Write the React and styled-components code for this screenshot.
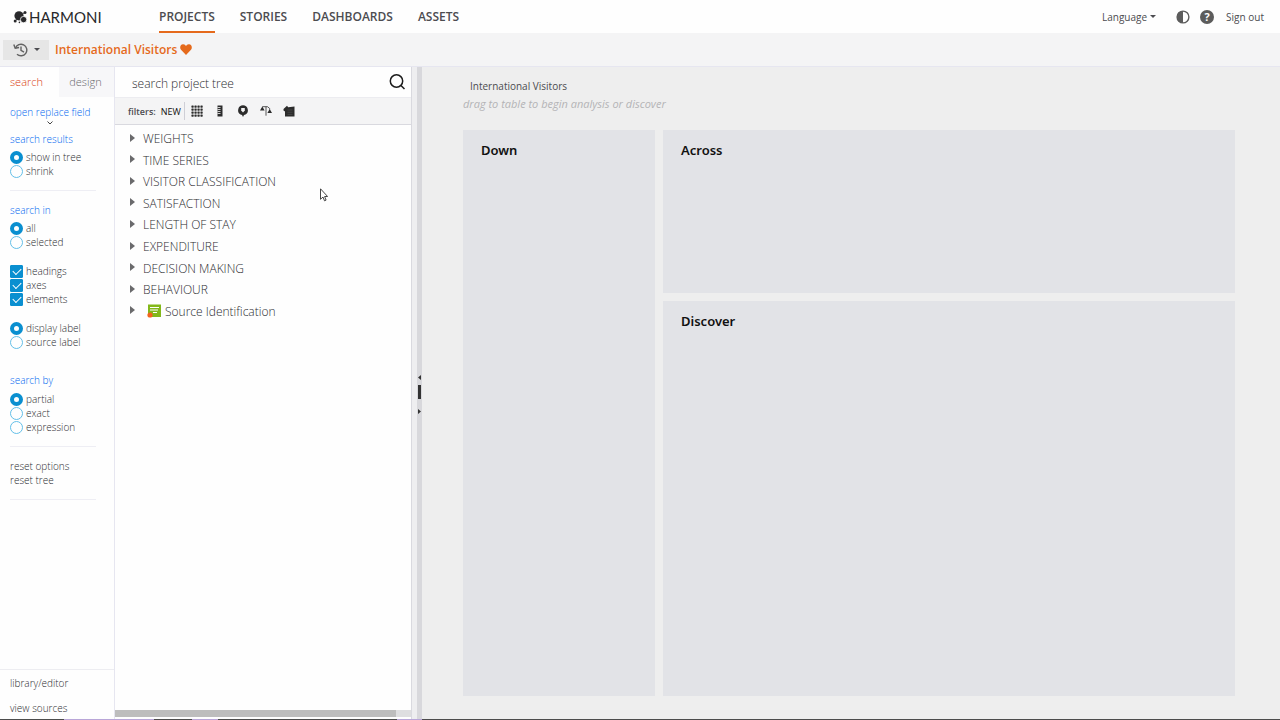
import React, { useState } from "react"
import styled, { createGlobalStyle } from "styled-components"

const colors = {
  accent: "#e56a1c",
  blue: "#0068f0",
  control: "#0a8fd0",
  text: "#4c4c50",
  dark: "#2c2c30",
  light: "#fefefe",
  bar: "#f4f4f5",
  line: "#e6e6f0",
}

const GlobalStyle = createGlobalStyle`
  * {
    box-sizing: border-box;
  }
  body {
    margin: 0;
    font-family: "Open Sans", "Noto Sans", sans-serif;
    color: ${colors.text};
    background: ${colors.light};
  }
  button,
  input {
    font: inherit;
    color: inherit;
  }
  button {
    border: 0;
    padding: 0;
    background: none;
    cursor: pointer;
  }
  a {
    color: inherit;
    text-decoration: none;
  }
`

const tree = [
  "WEIGHTS",
  "TIME SERIES",
  "VISITOR CLASSIFICATION",
  "SATISFACTION",
  "LENGTH OF STAY",
  "EXPENDITURE",
  "DECISION MAKING",
  "BEHAVIOUR",
]

const Logo = () => (
  <svg width="14" height="14" viewBox="0 0 14 14" fill="#29292b">
    <circle cx="6" cy="5.8" r="4.6" />
    <circle cx="10.6" cy="9.6" r="3.2" stroke="#fefefe" strokeWidth=".8" />
    <circle cx="12" cy="2.4" r="1.5" />
    <circle cx="2.2" cy="11" r="1.5" />
    <circle cx="6.4" cy="12.4" r=".8" />
    <path d="M2.2 11L4 9M8 5.500l3.500-3" stroke="#29292b" strokeWidth=".8" />
  </svg>
)

const HistoryIcon = () => (
  <svg width="15" height="14" viewBox="0 0 15 14" fill="none" stroke="#626262" strokeWidth="1.400">
    <path d="M2.500 5.200A5.800 5.800 0 1 1 4 11.200" />
    <path d="M.8 1.500L2.200 5.300l3.900-.8" />
    <path d="M8 3.600v3.800l3 1.800" />
  </svg>
)

const Heart = () => (
  <svg width="12" height="11" viewBox="0 0 12 11" fill={colors.accent}>
    <path d="M6 11L1 5.800C-.6 4 .2 .3 3 .2 4.500 .1 5.500 1 6 2 6.500 1 7.500 .1 9 .2c2.800 .1 3.600 3.800 2 5.600z" />
  </svg>
)

const Contrast = () => (
  <svg width="14" height="14" viewBox="0 0 14 14">
    <circle cx="7" cy="7" r="5.900" fill="#fefefe" stroke="#5c5c5c" strokeWidth="1.400" />
    <path d="M7 1a6 6 0 0 0 0 12z" fill="#5c5c5c" />
  </svg>
)

const SearchIcon = () => (
  <svg width="16" height="16" viewBox="0 0 16 16" fill="none" stroke="#1c1c1c">
    <circle cx="7.500" cy="7" r="6.200" strokeWidth="1.500" />
    <path d="M12 11.500l3.500 3.500" strokeWidth="1.500" />
  </svg>
)

const GridIcon = () => (
  <svg width="12" height="12" viewBox="0 0 12 12" fill="#2c2c2c">
    {[0, 1, 2, 3].map(r =>
      [0, 1, 2, 3].map(c => (
        <rect key={`${r}${c}`} x={c * 3 + 0.4} y={r * 3 + 0.4} width="2.300" height="2.300" rx=".6" />
      ))
    )}
  </svg>
)

const RulerIcon = () => (
  <svg width="12" height="12" viewBox="0 0 12 12">
    <path d="M3.500 .5h5v11h-5z" fill="#2c2c2c" />
    <path d="M3.500 2.500h3M3.500 4.500h3M3.500 6.500h3M3.500 8.500h3" stroke="#f4f4f5" strokeWidth=".8" />
  </svg>
)

const PinIcon = () => (
  <svg width="12" height="12" viewBox="0 0 12 12">
    <path d="M6 .3A4.900 4.900 0 0 0 3.500 9.400L5 10l1 2 1-2 1.500-.6A4.900 4.900 0 0 0 6 .3z" fill="#2c2c2c" />
    <path d="M4.200 3h3.600v2.600L6 7.600 4.200 5.600z" fill="#f4f4f5" />
  </svg>
)

const ScalesIcon = () => (
  <svg width="12" height="12" viewBox="0 0 12 12" fill="#2c2c2c">
    <path d="M0 5.500L2.300 1.500l2.300 4zM7.400 8l2.300-4L12 8z" />
    <path d="M2.300 1.700h3.700v9M6 1.700h1.500M9.700 4.500v-1L7.500 1.700" stroke="#2c2c2c" strokeWidth=".8" fill="none" />
  </svg>
)

const FolderIcon = () => (
  <svg width="12" height="12" viewBox="0 0 12 12" fill="#2c2c2c">
    <path d="M.5 4L4 .8l1.200 1.400 6.300-.7V11.500H2V6.500L.5 5.500z" />
    <path d="M4.500 5h5M4.500 7.200h5M4.500 9.400h5" stroke="#555" strokeWidth=".6" />
  </svg>
)

const SourceIcon = () => (
  <svg width="14" height="14" viewBox="0 0 14 14">
    <path d="M1 .5h13v12.500H1z" fill="#83b81a" />
    <path d="M3 3.500h9M3 6h8M6 8.500h4" stroke="#fefefe" strokeWidth="1.200" />
    <circle cx="3" cy="11" r="2.600" fill="#f2641d" />
  </svg>
)

const Pointer = () => (
  <svg width="8" height="14" viewBox="0 0 8 14">
    <path d="M.5 .8v10.500L3 9l1.500 3.800 1.600-.7L4.600 8.500h3z" fill="#fff" stroke="#333" strokeWidth=".9" />
  </svg>
)

const Options = ({ type, name, items, initial }) => {
  const [picked, setPicked] = useState(initial)

  const toggle = item => {
    if (type === "radio") return setPicked([item])
    setPicked(picked.includes(item) ? picked.filter(p => p !== item) : [...picked, item])
  }

  return (
    <OptionList>
      {items.map(item => (
        <Option key={item}>
          <Tick type={type} name={name} checked={picked.includes(item)} onChange={() => toggle(item)} />
          {item}
        </Option>
      ))}
    </OptionList>
  )
}

const App = () => {
  const [query, setQuery] = useState("")

  return (
    <Page>
      <GlobalStyle />
      <Header>
        <Brand href="#">
          <Logo />
          HARMONI
        </Brand>
        <Nav>
          <NavLink href="#" $active>PROJECTS</NavLink>
          <NavLink href="#">STORIES</NavLink>
          <NavLink href="#">DASHBOARDS</NavLink>
          <NavLink href="#">ASSETS</NavLink>
        </Nav>
        <Account>
          <Language type="button">
            Language <Caret />
          </Language>
          <Round type="button" aria-label="Contrast">
            <Contrast />
          </Round>
          <Help type="button">?</Help>
          <a href="#">Sign out</a>
        </Account>
      </Header>

      <TitleBar>
        <History type="button" aria-label="History">
          <HistoryIcon />
          <Caret />
        </History>
        <Title>International Visitors</Title>
        <Heart />
      </TitleBar>

      <Body>
        <Sidebar>
          <Tabs>
            <Tab type="button" $active>search</Tab>
            <Tab type="button">design</Tab>
          </Tabs>
          <Settings>
            <Replace type="button">
              open replace field
              <svg width="6" height="4" viewBox="0 0 6 4" fill="none" stroke="#444">
                <path d="M.5 .5L3 3 5.500 .5" />
              </svg>
            </Replace>
            <Label>search results</Label>
            <Options type="radio" name="results" items={["show in tree", "shrink"]} initial={["show in tree"]} />
            <Rule />
            <Label>search in</Label>
            <Options type="radio" name="scope" items={["all", "selected"]} initial={["all"]} />
            <Options
              type="checkbox"
              name="parts"
              items={["headings", "axes", "elements"]}
              initial={["headings", "axes", "elements"]}
            />
            <Options type="radio" name="label" items={["display label", "source label"]} initial={["display label"]} />
            <Label $spaced>search by</Label>
            <Options type="radio" name="match" items={["partial", "exact", "expression"]} initial={["partial"]} />
            <Rule />
            <Action type="button">reset options</Action>
            <Action type="button">reset tree</Action>
            <Rule />
          </Settings>
          <SideLinks>
            <a href="#">library/editor</a>
            <a href="#">view sources</a>
          </SideLinks>
        </Sidebar>

        <TreePanel>
          <SearchBox>
            <input
              aria-label="search project tree"
              placeholder="search project tree"
              value={query}
              onChange={e => setQuery(e.target.value)}
            />
            <button type="button" aria-label="Search">
              <SearchIcon />
            </button>
          </SearchBox>
          <Filters>
            <strong>filters:</strong>
            <NewFilter type="button">NEW</NewFilter>
            <button type="button" aria-label="Grid"><GridIcon /></button>
            <button type="button" aria-label="Measure"><RulerIcon /></button>
            <button type="button" aria-label="Location"><PinIcon /></button>
            <button type="button" aria-label="Weight"><ScalesIcon /></button>
            <button type="button" aria-label="Folder"><FolderIcon /></button>
          </Filters>
          <Tree>
            {tree.map(name => (
              <TreeRow key={name}>
                <Arrow />
                {name}
              </TreeRow>
            ))}
            <TreeRow $source>
              <Arrow />
              <SourceIcon />
              Source Identification
            </TreeRow>
          </Tree>
          <ScrollTrack>
            <ScrollThumb />
          </ScrollTrack>
          <Cursor>
            <Pointer />
          </Cursor>
        </TreePanel>

        <Splitter>
          <Handle>
            <svg width="5" height="40" viewBox="0 0 5 40" fill="#333">
              <path d="M4 0v5L1 2.500zM1 10h3v14H1zM1 34v5l3-2.500z" />
            </svg>
          </Handle>
        </Splitter>

        <Workspace>
          <Subject>International Visitors</Subject>
          <Hint>drag to table to begin analysis or discover</Hint>
          <Zones>
            <Zone $tall>Down</Zone>
            <Zone>Across</Zone>
            <Zone>Discover</Zone>
          </Zones>
        </Workspace>
      </Body>
      <Footer />
    </Page>
  )
}

const Page = styled.div`
  display: flex;
  flex-direction: column;
  min-height: 100vh;
`

const Header = styled.header`
  display: flex;
  align-items: center;
  height: 33px;
  padding: 0 16px 0 13px;
`

const Brand = styled.a`
  display: flex;
  align-items: center;
  gap: 2px;
  width: 146px;
  font-family: Lato, sans-serif;
  font-size: 15px;
  color: #29292b;
`

const Nav = styled.nav`
  display: flex;
  align-self: stretch;
  gap: 25px;
`

const NavLink = styled.a`
  display: flex;
  align-items: center;
  font-size: 12px;
  font-weight: 600;
  border-top: 2px solid transparent;
  border-bottom: 2px solid ${({ $active }) => ($active ? colors.accent : "transparent")};
`

const Account = styled.div`
  display: flex;
  align-items: center;
  margin-left: auto;
  font-size: 10px;
  font-weight: 400;
`

const Caret = styled.span`
  border: 3px solid transparent;
  border-top-color: currentColor;
  border-bottom: 0;
`

const Language = styled.button`
  display: flex;
  align-items: center;
  gap: 3px;
  margin-right: 20px;
`

const Round = styled.button`
  display: flex;
  margin-right: 10px;
`

const Help = styled.button`
  width: 14px;
  height: 14px;
  margin-right: 12px;
  border-radius: 50%;
  background: #5c5c5c;
  color: ${colors.light};
  font-size: 11px;
  font-weight: 700;
  line-height: 14px;
`

const TitleBar = styled.div`
  display: flex;
  align-items: center;
  height: 34px;
  padding-left: 3px;
  background: ${colors.bar};
  border-bottom: 1px solid ${colors.line};
`

const History = styled.button`
  display: flex;
  align-items: center;
  justify-content: center;
  gap: 6px;
  width: 46px;
  height: 20px;
  margin-right: 6px;
  background: #e6e6e6;
`

const Title = styled.h1`
  margin: 0 3px 0 0;
  font-size: 12px;
  font-weight: 600;
  color: ${colors.accent};
`

const Body = styled.main`
  display: flex;
  flex: 1;
`

const Sidebar = styled.aside`
  display: flex;
  flex-direction: column;
  width: 115px;
  border-right: 1px solid ${colors.line};
  font-size: 10px;
  font-weight: 300;
  line-height: 14px;
  color: ${colors.dark};
`

const Tabs = styled.div`
  display: flex;
  height: 30px;
`

const Tab = styled.button`
  flex: 1;
  padding-right: ${({ $active }) => ($active ? "6px" : "2px")};
  font-size: 11px;
  color: ${({ $active }) => ($active ? "#d93c10" : "#6a6a6e")};
  background: ${({ $active }) => ($active ? "transparent" : "#f7f7f9")};
`

const Settings = styled.div`
  display: flex;
  flex-direction: column;
  flex: 1;
  padding: 8px 18px 0 10px;
`

const Replace = styled.button`
  display: flex;
  flex-direction: column;
  align-items: center;
  align-self: flex-start;
  gap: 2px;
  margin-bottom: 7px;
  white-space: nowrap;
  line-height: 14px;
  color: ${colors.blue};
`

const Label = styled.h2`
  margin: ${({ $spaced }) => ($spaced ? "24px 0 5px" : "0 0 4px")};
  font-size: 10px;
  font-weight: 300;
  color: ${colors.blue};
`

const OptionList = styled.div`
  & + & {
    margin-top: 15px;
  }
`

const Option = styled.label`
  display: flex;
  align-items: center;
  gap: 3px;
  height: 14px;
  white-space: nowrap;
`

const Tick = styled.input`
  appearance: none;
  width: 13px;
  height: 13px;
  margin: 0;
  background: ${colors.light};

  &[type="radio"] {
    border: 1px solid #63bfe8;
    border-radius: 50%;
  }
  &[type="radio"]:checked {
    border: 4px solid ${colors.control};
  }
  &[type="checkbox"] {
    border: 1px solid ${colors.control};
    border-radius: 1px;
  }
  &[type="checkbox"]:checked {
    display: grid;
    place-items: center;
    background: ${colors.control};
  }
  &[type="checkbox"]:checked:after {
    content: "";
    width: 7px;
    height: 4px;
    margin-bottom: 2px;
    border: solid #fff;
    border-width: 0 0 1px 1px;
    transform: rotate(-45deg);
  }
`

const Rule = styled.hr`
  width: 100%;
  margin: 12px 0;
  border: 0;
  border-top: 1px solid #eeeef4;
`

const Action = styled.button`
  text-align: left;
  line-height: 14px;
`

const SideLinks = styled.nav`
  display: flex;
  flex-direction: column;
  gap: 11px;
  padding: 6px 10px 4px;
  border-top: 1px solid #ededf1;
`

const TreePanel = styled.section`
  position: relative;
  display: flex;
  flex-direction: column;
  width: 297px;
  border-right: 1px solid #d9d9df;
`

const SearchBox = styled.div`
  display: flex;
  align-items: center;
  height: 30px;
  padding: 0 6px 0 17px;

  input {
    flex: 1;
    min-width: 0;
    padding: 2px 0 0;
    border: 0;
    outline: 0;
    background: none;
    font-size: 12px;
    font-weight: 300;
  }
  input::placeholder {
    color: ${colors.dark};
    opacity: 1;
  }
  button {
    display: flex;
  }
`

const Filters = styled.div`
  display: flex;
  align-items: center;
  gap: 11px;
  height: 28px;
  padding-left: 13px;
  background: ${colors.bar};
  border-top: 1px solid #ececf0;
  border-bottom: 1px solid #d9d9df;
  font-size: 9px;

  strong {
    margin-right: -6px;
    font-weight: 600;
  }
  button {
    display: flex;
  }
`

const NewFilter = styled.button`
  align-items: center;
  height: 18px;
  padding-right: 3px;
  margin-right: -5px;
  border-right: 1px solid #cfcfd6;
  color: #111;
`

const Tree = styled.ul`
  display: grid;
  grid-auto-rows: 1fr;
  height: 197px;
  margin: 0 0 auto;
  padding: 3px 0 0 15px;
  list-style: none;
`

const TreeRow = styled.li`
  display: flex;
  align-items: center;
  gap: ${({ $source }) => ($source ? "4px" : "8px")};
  font-size: 12px;
  font-weight: 300;
  color: ${colors.dark};

  svg {
    margin-left: 8px;
  }
`

const Arrow = styled.span`
  margin-bottom: 2px;
  border: 4px solid transparent;
  border-left: 5px solid #6a6a6c;
  border-right: 0;
`

const ScrollTrack = styled.div`
  height: 7px;
  margin-bottom: 2px;
  background: #dedee0;
`

const ScrollThumb = styled.div`
  width: 95%;
  height: 7px;
  background: #bdbdbd;
`

const Cursor = styled.span`
  position: absolute;
  left: 205px;
  top: 121px;
  line-height: 0;
`

const Splitter = styled.div`
  display: flex;
  align-items: center;
  width: 10px;
  background: #eeeef0;
  border-right: 5px solid #d8d8dc;
`

const Handle = styled.span`
  display: flex;
  margin: 4px 0 0 5px;
`

const Workspace = styled.section`
  display: flex;
  flex-direction: column;
  flex: 1;
  padding: 12px 45px 23px 41px;
  background: #eeeeee;
`

const Subject = styled.div`
  padding-left: 7px;
  font-size: 10px;
  line-height: 14px;
`

const Hint = styled.em`
  margin: 3px 0 18px;
  font-size: 11px;
  line-height: 16px;
  color: #b4b4b6;
`

const Zones = styled.div`
  display: grid;
  flex: 1;
  grid-template-columns: 192fr 572fr;
  grid-template-rows: 163fr 395fr;
  gap: 8px;
`

const Zone = styled.section`
  grid-row: ${({ $tall }) => ($tall ? "span 2" : "auto")};
  padding: 11px 18px;
  background: #e2e3e7;
  font-family: "Noto Sans", sans-serif;
  font-size: 13px;
  font-weight: 600;
  line-height: 18px;
  color: #111;
`

const Footer = styled.footer`
  height: 1px;
  background: linear-gradient(
    90deg,
    #4c4c4c 5%,
    #b9a6d8 5% 12%,
    #4c4c4c 12% 15%,
    #b9a6d8 15% 17%,
    #4c4c4c 17% 31%,
    #b9a6d8 31% 33%,
    #4c4c4c 33%
  );
`

export default App
